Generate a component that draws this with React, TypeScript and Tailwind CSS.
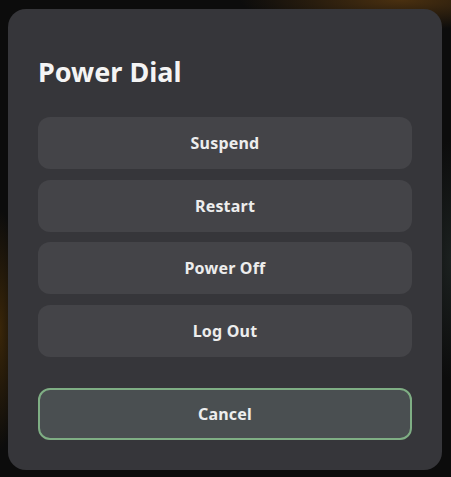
import React from 'react';

const actions = ['Suspend', 'Restart', 'Power Off', 'Log Out'];

export default function App() {
  return (
    <div
      className="w-[451px] h-[477px] overflow-hidden bg-[#0c0c0c] bg-[radial-gradient(ellipse_160px_30px_at_400px_0px,#4a3010_0%,transparent_100%),radial-gradient(ellipse_20px_120px_at_0px_330px,#3a2608_0%,transparent_100%),radial-gradient(ellipse_30px_120px_at_451px_260px,#1c2120_0%,transparent_100%)] pt-[9px] pl-[8px]"
      style={{ fontFamily: '"Noto Sans", sans-serif' }}
    >
      <div className="w-[434px] h-[461px] rounded-[18px] bg-[#36363a] px-[30px] pt-[49px] pb-[30px] flex flex-col">
        <h1 className="text-[27px] leading-[28px] font-bold text-[#f4f4f4]">Power Dial</h1>
        <div className="mt-[31px] flex flex-col gap-[10.67px]">
          {actions.map((a) => (
            <button
              key={a}
              className="h-[52px] w-full rounded-[12px] bg-[#444448] text-[16px] font-bold text-[#ededed] tracking-[0.2px] flex items-center justify-center"
            >
              {a}
            </button>
          ))}
        </div>
        <button className="mt-[31px] h-[53px] w-full rounded-[12px] border-2 border-[#7fae84] bg-[#4a4f51] text-[16px] font-bold text-[#ededed] tracking-[0.2px] flex items-center justify-center">
          Cancel
        </button>
      </div>
    </div>
  );
}
